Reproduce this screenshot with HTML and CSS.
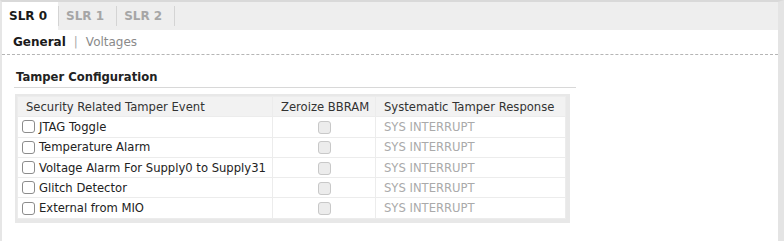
FILE: index.html
```html
<!DOCTYPE html>
<html lang="en">
<head>
  <meta charset="UTF-8">
  <title>Tamper Configuration</title>
  <link rel="stylesheet" href="styles.css">
</head>
<body>
  <div class="frame">
    <!-- SLR tabs -->
    <nav class="tabs">
      <span class="tab active">SLR 0</span>
      <span class="tab">SLR 1</span>
      <span class="tab">SLR 2</span>
    </nav>

    <div class="pane">
      <div class="subtabs">
        <span class="sub active">General</span>
        <span class="sep">|</span>
        <span class="sub">Voltages</span>
      </div>

      <section class="group">
        <h3>Tamper Configuration</h3>
        <div class="tablewrap">
          <table>
            <colgroup><col class="c1"><col class="c2"><col></colgroup>
            <thead>
              <tr>
                <th>Security Related Tamper Event</th>
                <th>Zeroize BBRAM</th>
                <th>Systematic Tamper Response</th>
              </tr>
            </thead>
            <tbody>
              <tr><td><label><span class="cb"></span>JTAG Toggle</label></td><td class="mid"><span class="cb off"></span></td><td class="dim">SYS INTERRUPT</td></tr>
              <tr><td><label><span class="cb"></span>Temperature Alarm</label></td><td class="mid"><span class="cb off"></span></td><td class="dim">SYS INTERRUPT</td></tr>
              <tr><td><label><span class="cb"></span>Voltage Alarm For Supply0 to Supply31</label></td><td class="mid"><span class="cb off"></span></td><td class="dim">SYS INTERRUPT</td></tr>
              <tr><td><label><span class="cb"></span>Glitch Detector</label></td><td class="mid"><span class="cb off"></span></td><td class="dim">SYS INTERRUPT</td></tr>
              <tr><td><label><span class="cb"></span>External from MIO</label></td><td class="mid"><span class="cb off"></span></td><td class="dim">SYS INTERRUPT</td></tr>
            </tbody>
          </table>
        </div>
      </section>
    </div>
  </div>
</body>
</html>
```

FILE: styles.css
```css
:root {
  --line: #d9d9d9;
  --bar: #eeeeee;
  --text: #222;
  --muted: #9a9a9a;
}
* {box-sizing: border-box;}
html,body{margin:0;height:100%;}
body{font-family:"DejaVu Sans", sans-serif;font-size:12px;color:var(--text);background:#fff;}

.frame{height:241px;border-top:2px solid var(--line);border-left:2px solid #e6e6e6;border-right:6px solid #e4e4e4;}

.tabs{display:flex;height:28px;background:var(--bar);}
.tab{display:flex;align-items:center;padding:0 12px 0 7px;color:#a6a6a6;font-weight:bold;}
.tab + .tab{border-left:1px solid #d4d4d4;margin:4px 0;}
.tab:last-child{border-right:1px solid #d4d4d4;}
.tab.active{background:#fff;color:#1a1a1a;padding:0 11px 0 7px;}

.subtabs{display:flex;align-items:center;gap:8px;padding:5px 11px 6px;border-bottom:1px dashed #b5b5b5;height:25px;}
.sub{color:#8a8a8a;}
.sub.active{color:#1a1a1a;font-weight:bold;}
.sep{color:#aaa;}

.group{padding:15px 0 0 12px;width:574px;font-size:11.6px;}
.group h3{margin:0;font-size:11.6px;font-weight:bold;padding:0 0 3px 2px;border-bottom:1px solid #d8d8d8;}

.tablewrap{margin:6px 6px 0 1px;background:#e8e8e8;padding:2px 4px 4px 2px;}
table{width:100%;border-collapse:collapse;background:#fff;table-layout:fixed;}
col.c1{width:255px;}
col.c2{width:103px;}
th,td{height:20.3px;padding:0 8px;text-align:left;white-space:nowrap;border:1px solid #ececec;}
thead th{background:#f2f2f2;font-weight:normal;color:#333;}
tbody td{padding:0 4px;}
td.mid{text-align:center;}
td.dim{color:#aaa;padding-left:8px;}

label{display:flex;align-items:center;gap:4px;}
.cb{display:inline-block;width:13px;height:13px;border:1px solid #8c8c8c;border-radius:3px;background:#fff;vertical-align:middle;}
.cb.off{border-color:#c8c8c8;background:#ececec;}
```
